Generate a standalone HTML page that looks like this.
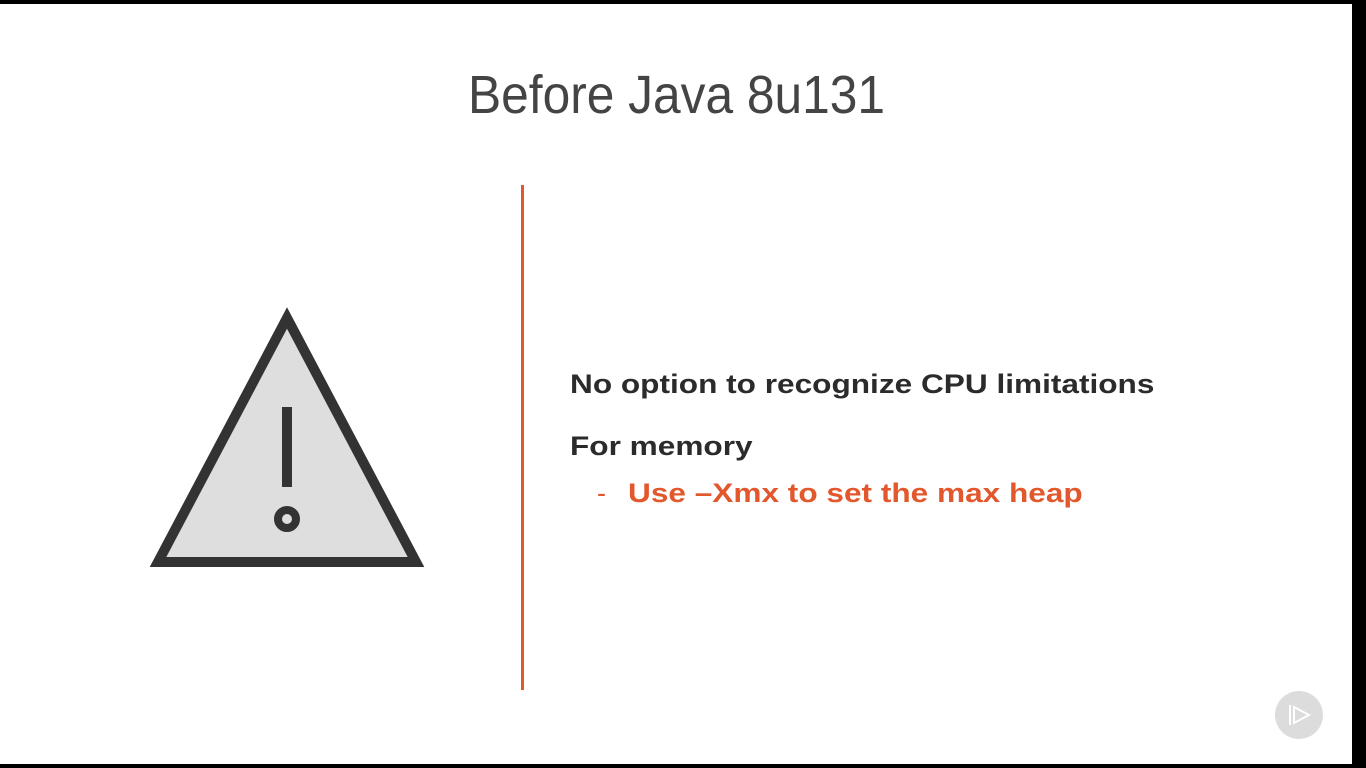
<!DOCTYPE html>
<html><head><meta charset="utf-8"><style>
html,body{margin:0;padding:0;width:1366px;height:768px;overflow:hidden;background:#000;}
#s{position:absolute;left:0;top:4px;width:1352px;height:760px;background:#fff;}
.t{position:absolute;font-family:"Liberation Sans",sans-serif;line-height:1;white-space:nowrap;transform-origin:0 0;}
.b{font-size:27px;font-weight:bold;transform:scaleX(1.17);}
</style></head><body>
<div id="s"></div>
<div class="t" style="left:468px;top:68px;font-size:54px;color:#444;transform:scaleX(0.92);">Before Java 8u131</div>
<div style="position:absolute;left:521px;top:185px;width:3px;height:505px;background:#e2572b;"></div>
<svg style="position:absolute;left:0;top:0" width="1366" height="768">
<polygon points="287,318 158,562 416,562" fill="#dedede" stroke="#333" stroke-width="10" stroke-linejoin="miter"/>
<rect x="282" y="407" width="10" height="80" fill="#333"/>
<circle cx="287" cy="519" r="9" fill="none" stroke="#333" stroke-width="8"/>
<circle cx="1299" cy="715" r="24" fill="#dcdcdc"/>
<path d="M1290 705 L1290 725 M1294 707 L1294 723 L1309 715 Z" fill="none" stroke="#fff" stroke-width="2" stroke-linejoin="miter"/>
</svg>
<div class="t b" style="left:570px;top:371px;color:#2b2b2b;">No option to recognize CPU limitations</div>
<div class="t b" style="left:570px;top:433px;color:#2b2b2b;">For memory</div>
<div class="t" style="left:597px;top:480px;font-size:27px;color:#e2572b;">-</div>
<div class="t b" style="left:628px;top:480px;color:#e2572b;">Use –Xmx to set the max heap</div>
</body></html>
